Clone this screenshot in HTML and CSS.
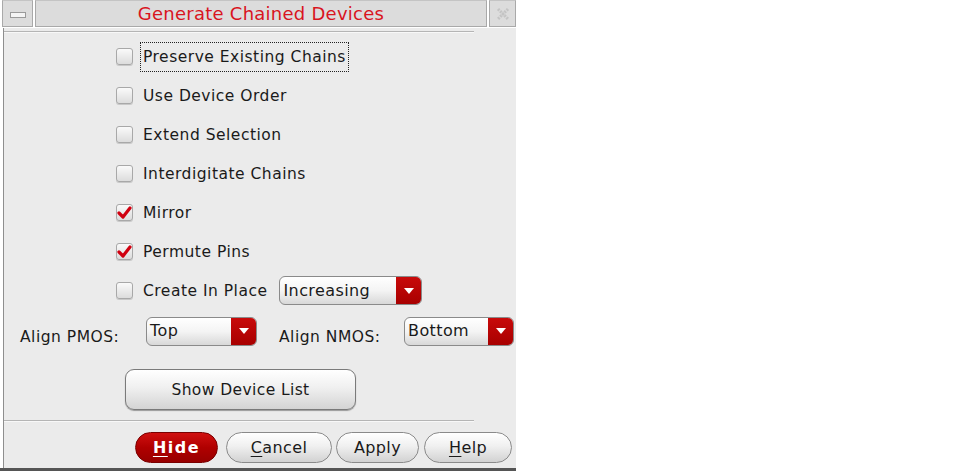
FILE: index.html
```html
<!DOCTYPE html>
<html>
<head>
<meta charset="utf-8">
<link rel="stylesheet" href="styles.css">
</head>
<body>
<div class="window">
  <div class="titlebar">
    <div class="tb-btn tb-min"><span class="min-bar"></span></div>
    <div class="tb-title">Generate Chained Devices</div>
    <div class="tb-btn tb-close">
      <svg width="16" height="16" viewBox="0 0 16 16"><path d="M3 3 L13 13 M13 3 L3 13" stroke="#c4c4c4" stroke-width="3" stroke-dasharray="2 1" fill="none"/></svg>
    </div>
  </div>
  <div class="body">
    <div class="sep"></div>
    <div class="options">
      <div class="opt"><span class="cb"></span><span class="lbl focus">Preserve Existing Chains</span></div>
      <div class="opt"><span class="cb"></span><span class="lbl">Use Device Order</span></div>
      <div class="opt"><span class="cb"></span><span class="lbl">Extend Selection</span></div>
      <div class="opt"><span class="cb"></span><span class="lbl">Interdigitate Chains</span></div>
      <div class="opt"><span class="cb checked"><svg width="15" height="14" viewBox="0 0 15 14"><path d="M2 7 L6 11 L13 2" stroke="#d00010" stroke-width="3.2" fill="none" stroke-linecap="round" stroke-linejoin="round"/></svg></span><span class="lbl">Mirror</span></div>
      <div class="opt"><span class="cb checked"><svg width="15" height="14" viewBox="0 0 15 14"><path d="M2 7 L6 11 L13 2" stroke="#d00010" stroke-width="3.2" fill="none" stroke-linecap="round" stroke-linejoin="round"/></svg></span><span class="lbl">Permute Pins</span></div>
      <div class="opt"><span class="cb"></span><span class="lbl">Create In Place</span>
        <div class="combo combo-inc"><span class="combo-text">Increasing</span><span class="combo-arrow"><svg width="10" height="6" viewBox="0 0 10 6"><path d="M0 0 L10 0 L5 6 Z" fill="#fff"/></svg></span></div>
      </div>
    </div>
    <div class="align-row">
      <span class="align-lbl">Align PMOS:</span>
      <div class="combo combo-top"><span class="combo-text">Top</span><span class="combo-arrow"><svg width="10" height="6" viewBox="0 0 10 6"><path d="M0 0 L10 0 L5 6 Z" fill="#fff"/></svg></span></div>
      <span class="align-lbl nmos">Align NMOS:</span>
      <div class="combo combo-bot"><span class="combo-text">Bottom</span><span class="combo-arrow"><svg width="10" height="6" viewBox="0 0 10 6"><path d="M0 0 L10 0 L5 6 Z" fill="#fff"/></svg></span></div>
    </div>
    <div class="show-row"><button class="show-btn">Show Device List</button></div>
    <div class="sep sep-bottom"></div>
    <div class="footer">
      <button class="fbtn hide"><u>H</u>ide</button>
      <button class="fbtn cancel"><u>C</u>ancel</button>
      <button class="fbtn apply">Apply</button>
      <button class="fbtn help"><u>H</u>elp</button>
    </div>
  </div>
  <div class="underbar"></div>
</div>
</body>
</html>
```
FILE: styles.css
```css
html, body {
  margin: 0;
  padding: 0;
  background: #ffffff;
}
body {
  font-family: "DejaVu Sans", sans-serif;
  color: #1a1a1a;
}
.window {
  width: 516px;
  height: 471px;
  display: flex;
  flex-direction: column;
}
.titlebar {
  display: flex;
  height: 28px;
  background: #ffffff;
  gap: 2px;
  padding-left: 2px;
  box-sizing: border-box;
}
.tb-btn, .tb-title {
  background: #dcdcdc;
  border: 1px solid #a9a9a9;
  border-top-color: #c4c4c4;
  box-sizing: border-box;
  height: 27px;
}
.tb-min {
  width: 31px;
  display: flex;
  align-items: center;
  justify-content: center;
}
.min-bar {
  display: block;
  width: 14px;
  height: 4px;
  background: #f4f4f4;
  border: 1px solid #9a9a9a;
  margin-top: 2px;
}
.tb-title {
  flex: 1;
  text-align: center;
  color: #d9141e;
  font-size: 18px;
  letter-spacing: 0.25px;
  line-height: 25px;
}
.tb-close {
  width: 27px;
  display: flex;
  align-items: center;
  justify-content: center;
}
.body {
  flex: 1;
  background: #ebebeb;
  border-left: 1px solid #8e8e8e;
  margin-left: 3px;
  display: flex;
  flex-direction: column;
}
.sep {
  height: 1px;
  background: #b5b5b5;
  width: 470px;
  margin-top: 3px;
  border-bottom: 1px solid #f8f8f8;
}
.options {
  display: flex;
  flex-direction: column;
  margin-top: 4px;
}
.opt {
  height: 39px;
  display: flex;
  align-items: center;
  padding-left: 112px;
  font-size: 15.5px;
  letter-spacing: 0.5px;
}
.cb {
  width: 17px;
  height: 17px;
  box-sizing: border-box;
  border: 1px solid #a8a8a8;
  border-radius: 3px;
  background: linear-gradient(#fafafa, #dcdcdc);
  box-shadow: 0 1px 0 #c8c8c8;
  margin-right: 7px;
  display: flex;
  align-items: center;
  justify-content: center;
  flex-shrink: 0;
}
.lbl {
  padding: 5px 2px;
  border: 1px dotted transparent;
}
.lbl.focus {
  border-color: #222;
}
.combo {
  display: flex;
  height: 29px;
  box-sizing: border-box;
  border: 1px solid #8a8a8a;
  border-radius: 6px;
  overflow: hidden;
  background: linear-gradient(#ffffff, #f4f4f4 50%, #d8d8d8);
  font-size: 16px;
  letter-spacing: 0.4px;
}
.combo-text {
  flex: 1;
  padding-left: 3px;
  line-height: 27px;
}
.combo-top .combo-text,
.combo-bot .combo-text {
  line-height: 25px;
}
.combo-arrow {
  width: 25px;
  background: linear-gradient(#c80a0a, #a80000);
  display: flex;
  align-items: center;
  justify-content: center;
}
.combo-inc {
  width: 143px;
  margin-left: 9px;
}
.align-row {
  display: flex;
  align-items: center;
  height: 30px;
  margin-top: 6px;
  font-size: 15.5px;
  letter-spacing: 0.5px;
}
.align-lbl {
  margin-left: 16px;
  margin-top: 12px;
  width: 126px;
}
.align-lbl.nmos {
  margin-left: 22px;
  width: 125px;
}
.combo-top {
  width: 111px;
}
.combo-bot {
  width: 110px;
}
.show-row {
  margin-top: 23px;
  padding-left: 121px;
}
.show-btn {
  width: 231px;
  height: 41px;
  border: 1px solid #7a7a7a;
  border-radius: 9px;
  background: linear-gradient(#ffffff, #f0f0f0 45%, #d4d4d4);
  font-family: "DejaVu Sans", sans-serif;
  font-size: 15.5px;
  letter-spacing: 0.4px;
  color: #1a1a1a;
  box-shadow: 0 1px 1px #999;
}
.sep-bottom {
  margin-top: 10px;
}
.footer {
  display: flex;
  margin-top: 10px;
  padding-left: 131px;
}
.fbtn {
  height: 31px;
  border: 1px solid #8a8a8a;
  border-radius: 16px;
  background: linear-gradient(#ffffff, #f0f0f0 45%, #d2d2d2);
  font-family: "DejaVu Sans", sans-serif;
  font-size: 16px;
  letter-spacing: 0.4px;
  color: #1a1a1a;
  padding: 0;
}
.fbtn u {
  text-underline-offset: 3px;
}
.hide {
  width: 83px;
  background: linear-gradient(#d01010, #b00000 50%, #980000);
  border-color: #7a0000;
  color: #fff;
  font-weight: bold;
  letter-spacing: 1.5px;
}
.cancel { width: 106px; margin-left: 8px; }
.apply { width: 83px; margin-left: 4px; }
.help { width: 88px; margin-left: 5px; }
.underbar {
  height: 3px;
  background: #555;
  margin-top: auto;
}
```
